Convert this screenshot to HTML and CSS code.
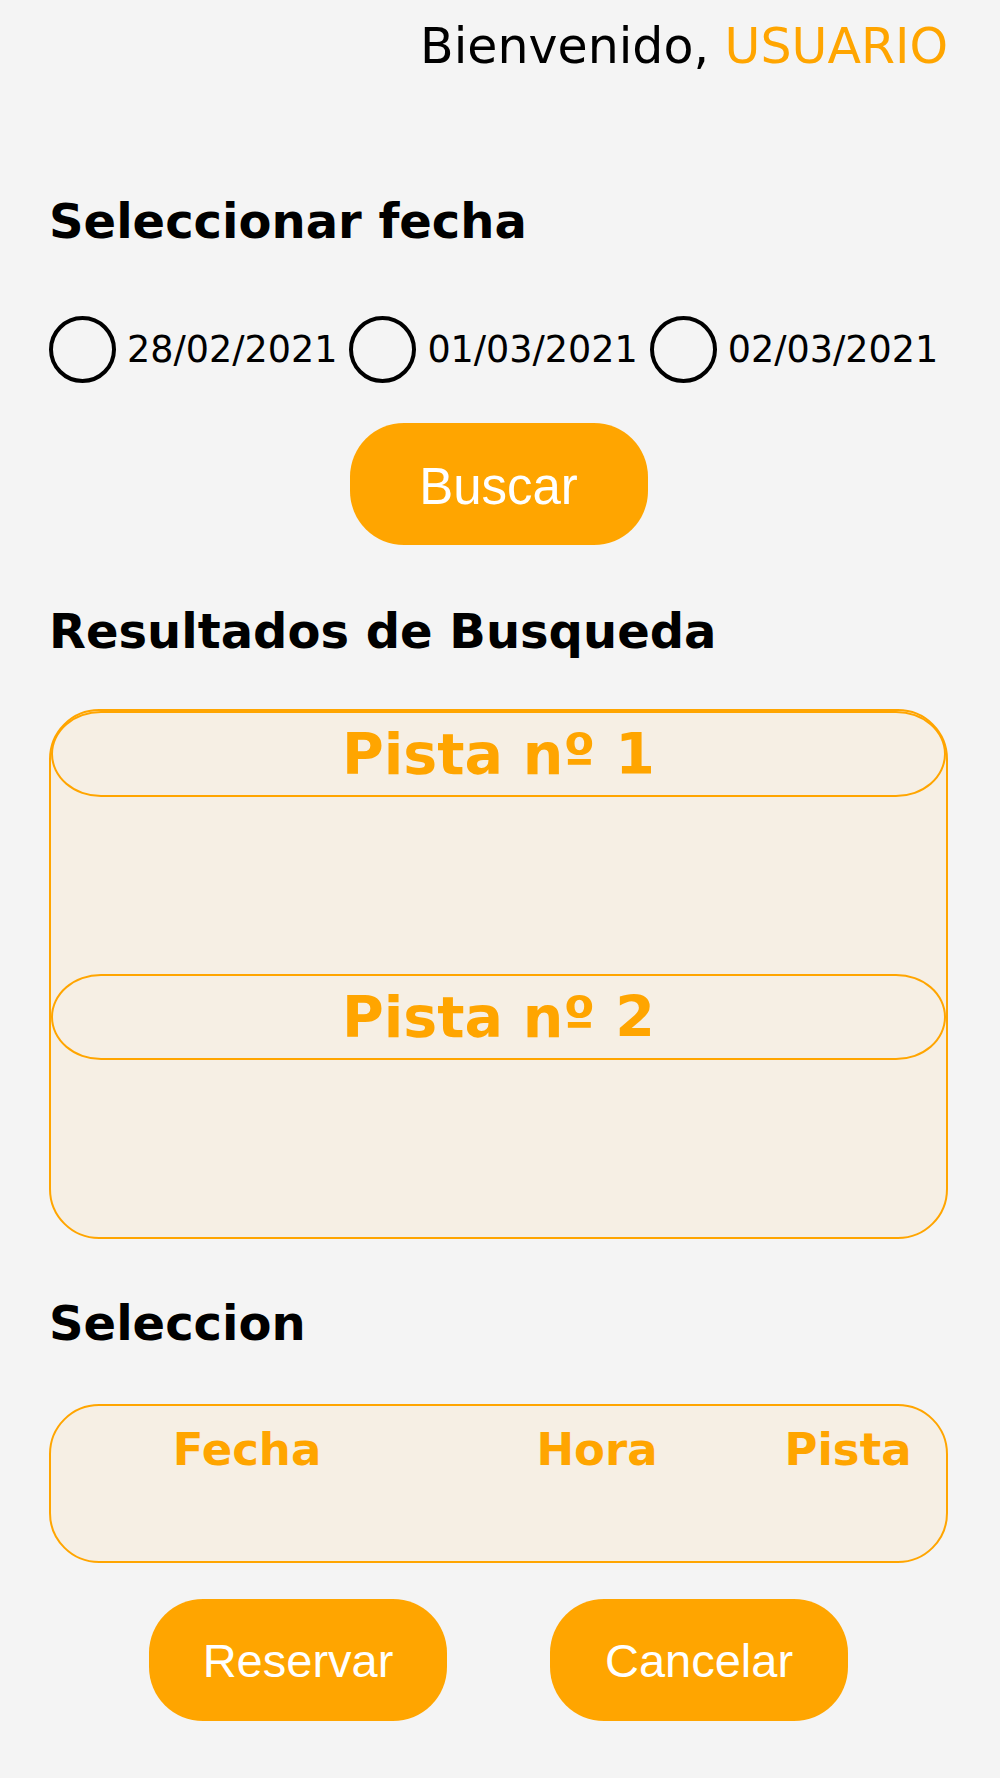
FILE: index.html
```html
<!DOCTYPE html>
<html lang="es">
<head>
<meta charset="utf-8">
<title>Reserva de pistas</title>
<link rel="stylesheet" href="styles.css">
</head>
<body>
<div class="page">
  <header class="welcome">Bienvenido, <span class="user">USUARIO</span></header>

  <h2 class="section-title title-date">Seleccionar fecha</h2>
  <div class="dates">
    <label class="date"><input class="radio" type="radio" name="fecha"><span>28/02/2021</span></label>
    <label class="date"><input class="radio" type="radio" name="fecha"><span>01/03/2021</span></label>
    <label class="date"><input class="radio" type="radio" name="fecha"><span>02/03/2021</span></label>
  </div>
  <div class="actions actions-search">
    <button class="btn btn-search" type="button">Buscar</button>
  </div>

  <h2 class="section-title title-results">Resultados de Busqueda</h2>
  <div class="results">
    <section class="court">
      <div class="court-head">Pista nº 1</div>
      <div class="court-body"></div>
    </section>
    <section class="court">
      <div class="court-head">Pista nº 2</div>
      <div class="court-body"></div>
    </section>
  </div>

  <h2 class="section-title title-selection">Seleccion</h2>
  <div class="selection">
    <div class="sel-cols">
      <span class="sel-col">Fecha</span>
      <span class="sel-col">Hora</span>
      <span class="sel-col">Pista</span>
    </div>
  </div>

  <div class="actions actions-confirm">
    <button class="btn btn-confirm" type="button">Reservar</button>
    <button class="btn btn-confirm" type="button">Cancelar</button>
  </div>
</div>
</body>
</html>
```

FILE: styles.css
```css
html, body {
  margin: 0;
  padding: 0;
  background: #f4f4f4;
}

body {
  font-family: "DejaVu Sans", Verdana, sans-serif;
  color: #000;
}

.page {
  padding: 18px 52px 57px 49px;
}

.welcome {
  font-size: 49px;
  line-height: 57px;
  text-align: right;
}

.user {
  color: #ffa500;
}

.section-title {
  margin: 0;
  font-size: 48px;
  line-height: 56px;
  font-weight: bold;
}

.title-date {
  margin-top: 118px;
}

.title-results {
  margin-top: 58px;
}

.title-selection {
  margin-top: 56px;
}

.dates {
  display: flex;
  align-items: center;
  gap: 12px;
  margin-top: 67px;
  height: 67px;
}

.date {
  display: flex;
  align-items: center;
  gap: 11px;
  font-size: 36.5px;
  line-height: 42px;
}

.radio {
  appearance: none;
  -webkit-appearance: none;
  margin: 0;
  width: 67px;
  height: 67px;
  box-sizing: border-box;
  border: 4.5px solid #000;
  border-radius: 50%;
  background: transparent;
  flex: none;
}

.actions {
  display: flex;
  justify-content: center;
}

.actions-search {
  margin-top: 40px;
}

.actions-confirm {
  margin-top: 36px;
  gap: 103px;
}

.btn {
  width: 298px;
  height: 122px;
  border: none;
  border-radius: 54px;
  background: #ffa500;
  color: #fff;
  font-family: "Liberation Sans", Arial, sans-serif;
  padding: 0;
}

.btn-search {
  font-size: 51px;
  padding-top: 5px;
}

.btn-confirm {
  font-size: 47px;
}

.results {
  margin-top: 50px;
  height: 530px;
  box-sizing: border-box;
  border: 2px solid #ffa500;
  border-radius: 50px;
  background: #f6efe4;
}

.court-head {
  height: 86px;
  box-sizing: border-box;
  border: 2px solid #ffa500;
  border-radius: 50px / 43px;
  display: flex;
  align-items: center;
  justify-content: center;
  color: #ffa500;
  font-size: 57px;
  line-height: 66px;
  font-weight: bold;
}

.court-body {
  height: 177px;
}

.selection {
  margin-top: 53px;
  height: 159px;
  box-sizing: border-box;
  border: 2px solid #ffa500;
  border-radius: 50px;
  background: #f6efe4;
  padding-top: 17px;
}

.sel-cols {
  display: grid;
  grid-template-columns: 392px 308px 194px;
}

.sel-col {
  text-align: center;
  color: #ffa500;
  font-size: 45px;
  line-height: 53px;
  font-weight: bold;
}
```
